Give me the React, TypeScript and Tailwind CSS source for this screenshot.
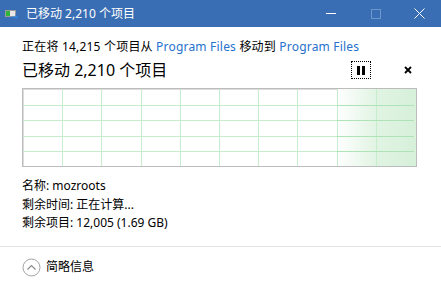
import React from "react"

const font = { fontFamily: '"Noto Sans", "Noto Sans CJK SC", sans-serif' }

function AppIcon() {
  return (
    <svg width="13" height="9" viewBox="0 0 13 9">
      <rect x="0.5" y="0.5" width="10" height="6" fill="#e8e8e8" stroke="#9a9a9a" />
      <rect x="1" y="1" width="4" height="5" fill="#2fb53a" />
      <path d="M6 6.5h4.5V4.5l2.5 2.5-2.5 2.5V7.5H6z" fill="#2f86e0" />
    </svg>
  )
}

function Graph() {
  const cols = [39, 78, 118, 157, 196, 235, 274, 314, 353]
  const rows = [16, 31, 47, 62]
  return (
    <div className="mt-[8px] h-[79px] w-[395px] border border-[#bcbcbc] shadow-[inset_1px_1px_0_#dcdcdc] bg-white">
      <svg width="393" height="77" viewBox="0 0 393 77" className="block">
        <defs>
          <linearGradient id="g1" x1="0" x2="1" y1="0" y2="0">
            <stop offset="0" stopColor="#ffffff" />
            <stop offset="1" stopColor="#e1f4e3" />
          </linearGradient>
          <linearGradient id="g2" x1="0" x2="1" y1="0" y2="0">
            <stop offset="0" stopColor="#e1f4e3" />
            <stop offset="1" stopColor="#d6f0da" />
          </linearGradient>
        </defs>
        <rect x="314" y="0" width="39" height="77" fill="url(#g1)" />
        <rect x="353" y="0" width="40" height="77" fill="url(#g2)" />
        {cols.map((x) => (
          <line key={x} x1={x + 0.5} x2={x + 0.5} y1="0" y2="77" stroke="#c6eecd" strokeWidth="1" />
        ))}
        {rows.map((y) => (
          <line key={y} x1="0" x2="391" y1={y + 0.5} y2={y + 0.5} stroke="#c6eecd" strokeWidth="1" />
        ))}
        {rows.map((y) => (
          <line key={"d" + y} x1="314" x2="391" y1={y + 0.5} y2={y + 0.5} stroke="#ade3b7" strokeWidth="1" />
        ))}
      </svg>
    </div>
  )
}

export default function App() {
  return (
    <div className="w-[441px] h-[287px] bg-white flex flex-col overflow-hidden text-black" style={font}>
      {/* title bar */}
      <div className="h-[27px] bg-[#3a6eb4] flex items-center shrink-0">
        <div className="ml-[5px] mt-[1px] flex items-center">
          <AppIcon />
        </div>
        <span className="ml-[8px] text-[12px] leading-none text-white">已移动 2,210 个项目</span>
        <div className="ml-auto flex h-full">
          <div className="w-[45px] flex items-center justify-center">
            <div className="w-[10px] h-px bg-white" />
          </div>
          <div className="w-[45px] flex items-center justify-center">
            <div className="w-[10px] h-[10px] border border-[#6e97cc]" />
          </div>
          <div className="w-[43px] flex items-center justify-center">
            <svg width="11" height="11" viewBox="0 0 11 11">
              <path d="M0.5 0.5l10 10M10.5 0.5l-10 10" stroke="#fff" strokeWidth="1" />
            </svg>
          </div>
        </div>
      </div>

      {/* body */}
      <div className="px-[22px] flex flex-col">
        <div className="mt-[12px] text-[12px] leading-[16px] whitespace-nowrap tracking-[0.2px]">
          正在将 14,215 个项目从 <span className="text-[#2672cc]">Program Files</span> 移动到{" "}
          <span className="text-[#2672cc]">Program Files</span>
        </div>
        <div className="mt-[5px] flex items-center h-[20px]">
          <span className="text-[16px] leading-[20px]">已移动 2,210 个项目</span>
          <div className="ml-auto w-[20px] h-[18px] border border-dotted border-black flex items-center justify-center gap-[2px]">
            <div className="w-[3px] h-[9px] bg-black" />
            <div className="w-[3px] h-[9px] bg-black" />
          </div>
          <div className="ml-[33px] mr-[7px] flex items-center">
            <svg width="8" height="8" viewBox="0 0 8 8">
              <path d="M1 1l6 6M7 1l-6 6" stroke="#000" strokeWidth="1.8" />
            </svg>
          </div>
        </div>
        <Graph />
        <div className="mt-[10px] text-[12px] leading-[18.5px]">
          <div>名称: mozroots</div>
          <div>剩余时间: 正在计算...</div>
          <div>剩余项目: 12,005 (1.69 GB)</div>
        </div>
      </div>

      <div className="mt-auto h-px bg-[#e3e3e3] shrink-0" />
      <div className="h-[40px] flex items-center px-[22px] shrink-0">
        <svg width="19" height="19" viewBox="0 0 19 19">
          <circle cx="9.5" cy="9.5" r="8.5" fill="none" stroke="#a2a2a2" strokeWidth="1" />
          <path d="M5.5 11.5l4-4 4 4" fill="none" stroke="#8a8a8a" strokeWidth="1.2" />
        </svg>
        <span className="ml-[5px] text-[12px] leading-none">简略信息</span>
      </div>
    </div>
  )
}
